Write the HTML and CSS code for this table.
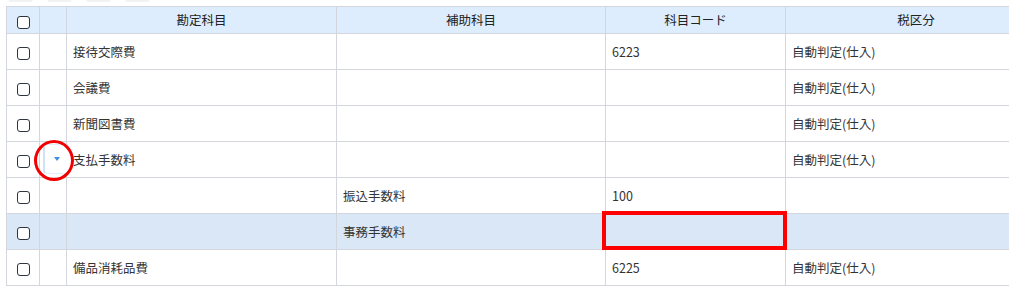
FILE: index.html
```html
<!DOCTYPE html>
<html lang="ja">
<head>
<meta charset="utf-8">
<link rel="stylesheet" href="styles.css">
</head>
<body>
<div class="tabs"><span class="tab"></span><span class="tab"></span><span class="tab"></span><span class="tab"></span></div>
<table class="grid">
  <colgroup>
    <col class="c-chk"><col class="c-exp"><col class="c-acc"><col class="c-sub"><col class="c-code"><col class="c-tax">
  </colgroup>
  <thead>
    <tr>
      <th><span class="cb"></span></th>
      <th></th>
      <th>勘定科目</th>
      <th>補助科目</th>
      <th>科目コード</th>
      <th>税区分</th>
    </tr>
  </thead>
  <tbody>
    <tr><td class="chk"><span class="cb"></span></td><td></td><td>接待交際費</td><td></td><td>6223</td><td>自動判定(仕入)</td></tr>
    <tr><td class="chk"><span class="cb"></span></td><td></td><td>会議費</td><td></td><td></td><td>自動判定(仕入)</td></tr>
    <tr><td class="chk"><span class="cb"></span></td><td></td><td>新聞図書費</td><td></td><td></td><td>自動判定(仕入)</td></tr>
    <tr><td class="chk"><span class="cb"></span></td><td class="exp"><span class="toggle"><span class="tri"></span></span><span class="ring"></span></td><td>支払手数料</td><td></td><td></td><td>自動判定(仕入)</td></tr>
    <tr><td class="chk"><span class="cb"></span></td><td></td><td></td><td>振込手数料</td><td>100</td><td></td></tr>
    <tr class="sel"><td class="chk"><span class="cb"></span></td><td></td><td></td><td>事務手数料</td><td class="mark"><span class="box"></span></td><td></td></tr>
    <tr><td class="chk"><span class="cb"></span></td><td></td><td>備品消耗品費</td><td></td><td>6225</td><td>自動判定(仕入)</td></tr>
  </tbody>
</table>
</body>
</html>
```

FILE: styles.css
```css
html, body {
  margin: 0;
  padding: 0;
  background: #ffffff;
  overflow: hidden;
}
body {
  font-family: "Noto Sans CJK JP", "Noto Sans", sans-serif;
  font-size: 12.5px;
  color: #333333;
}
.tabs {
  display: flex;
  gap: 14px;
  height: 7px;
  padding-left: 8px;
  margin-top: -1px;
}
.tab {
  width: 25px;
  height: 3px;
  border-radius: 0 0 6px 6px;
  background: #f1f2f4;
}
.grid {
  border-collapse: collapse;
  table-layout: fixed;
  width: 1040px;
  margin-left: 6px;
}
.c-chk { width: 33px; }
.c-exp { width: 27px; }
.c-acc { width: 270px; }
.c-sub { width: 269px; }
.c-code { width: 180px; }
.c-tax { width: 261px; }
th, td {
  border: 1px solid #d3d7dd;
  padding: 0 6px;
  height: 35px;
  text-align: left;
  white-space: nowrap;
  overflow: visible;
  line-height: 16px;
}
th {
  height: 26px;
  background: #deedfd;
  font-weight: normal;
  color: #222222;
  text-align: center;
  padding-top: 0;
}
th:first-child, td.chk {
  padding: 0;
  text-align: center;
}
thead th:first-child .cb { margin-top: 2px; }
.cb {
  display: inline-block;
  width: 11px;
  height: 11px;
  border: 1.5px solid #2e3540;
  border-radius: 3px;
  background: #ffffff;
  vertical-align: middle;
}
tr.sel td { background: #d9e7f7; }
td.exp {
  position: relative;
  padding: 0;
}
.toggle {
  position: absolute;
  left: 3px;
  top: 2px;
  width: 24px;
  height: 28px;
  border-left: 2px solid #cfe3f5;
  border-top: 1px solid #e2eef9;
  border-bottom: 1px solid #e2eef9;
  border-radius: 4px 0 0 4px;
  background: #ffffff;
}
.tri {
  position: absolute;
  left: 9px;
  top: 12px;
  width: 0;
  height: 0;
  border-left: 3.5px solid transparent;
  border-right: 3.5px solid transparent;
  border-top: 4px solid #3d8fe0;
}
.ring {
  position: absolute;
  left: -6px;
  top: -2px;
  width: 34px;
  height: 35px;
  border: 3.5px solid #f20000;
  border-radius: 50%;
  pointer-events: none;
}
td.mark { position: relative; }
.box {
  position: absolute;
  left: -4px;
  top: -3px;
  right: -2px;
  bottom: -1px;
  border: 4px solid #ff0000;
  pointer-events: none;
}
```
